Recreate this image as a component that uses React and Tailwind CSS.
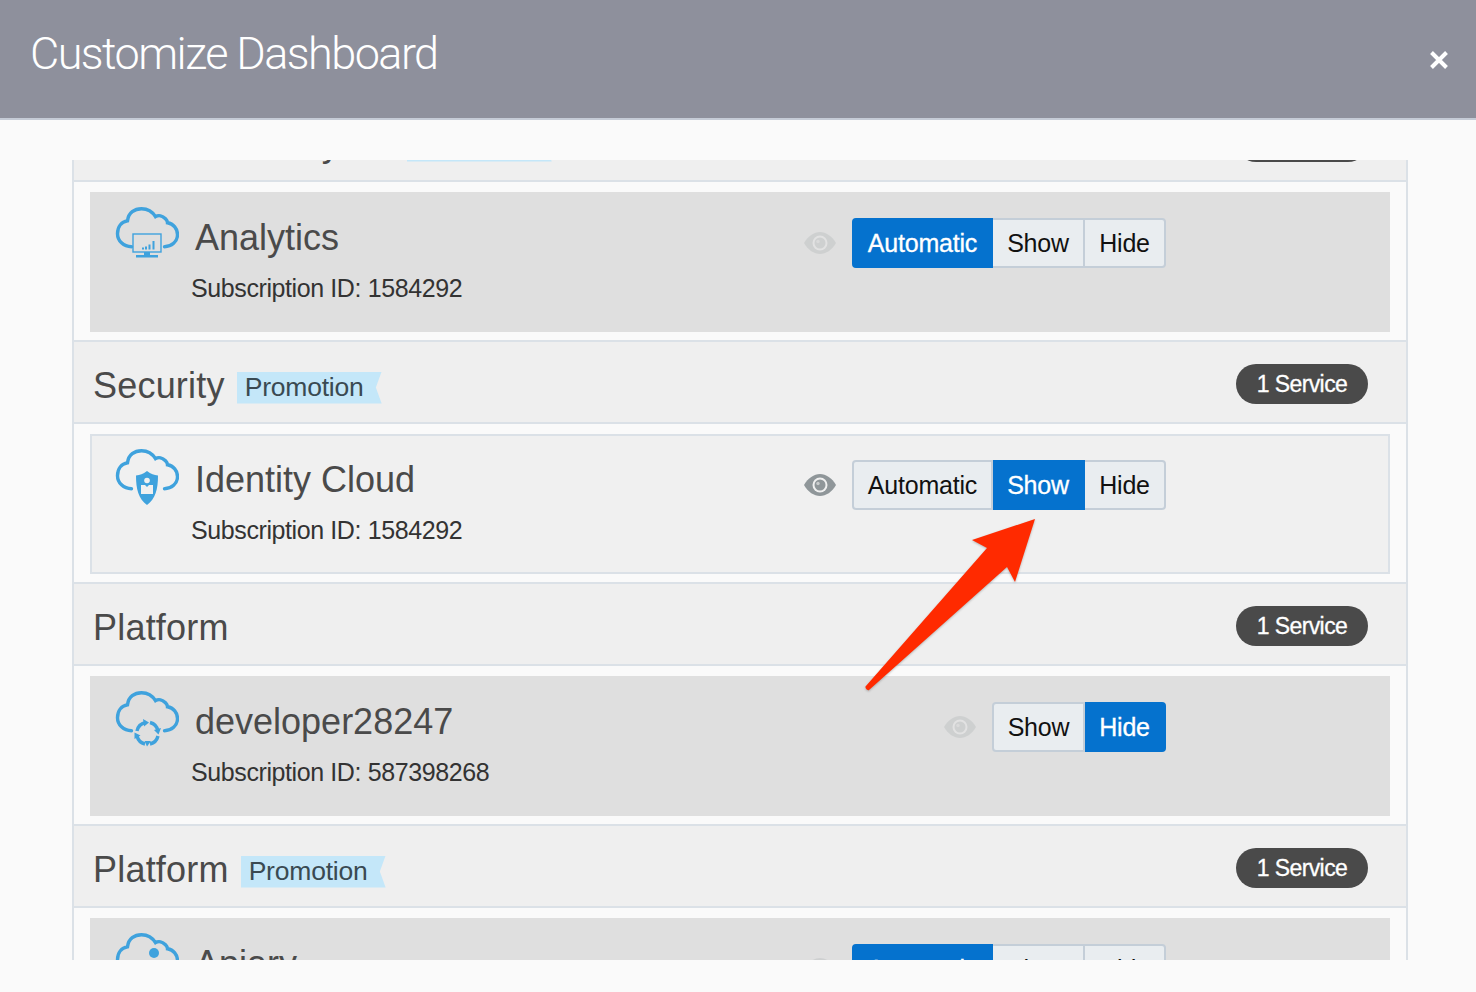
const font = { fontFamily: '"Liberation Sans", Arial, sans-serif' };

function Cloud({ children }) {
  return (
    <svg width="64" height="60" viewBox="0 0 64 60" className="shrink-0" fill="none">
      <path
        transform="translate(0.500 0.700)"
        d="M16 41C8 41 2 35 2 28C2 21 6 16 12 15C13 7 19 3 26 3C32 3 37 6 40 11C43 9 47 10 50 13C51.500 14.500 52 16 52 17C58 18 62 23 62 29C62 36 56 41 49 41"
        stroke="#3fa2dd"
        strokeWidth="3.400"
        strokeLinecap="round"
      />
      {children}
    </svg>
  );
}

function AnalyticsGlyph() {
  return (
    <g>
      <rect x="18" y="29" width="28" height="18" stroke="#3fa2dd" strokeWidth="1.400" fill="none" />
      <path d="M27 43.500h2M31 41.500v3M34.500 39.500v5M38.500 36v8.500" stroke="#3fa2dd" strokeWidth="2" />
      <path d="M29 47h6v3h-6z" fill="#3fa2dd" />
      <rect x="21" y="50" width="22" height="2.500" fill="#3fa2dd" />
    </g>
  );
}

function IdentityGlyph() {
  return (
    <g>
      <path d="M32 24C36 27 39 28 43 28.500C43 42 40.500 52 32 58C23.500 52 21 42 21 28.500C25 28 28 27 32 24Z" fill="#3fa2dd" />
      <circle cx="32" cy="33.500" r="2.800" fill="#f0f0f0" />
      <path d="M26 38h4l2 2 2-2h4v9H26z" fill="#f0f0f0" />
    </g>
  );
}

function DeveloperGlyph() {
  return (
    <g fill="none" stroke="#3fa2dd" strokeWidth="3.400">
      <path d="M22 42A11 11 0 0 1 31 33.500" />
      <path d="M35 33.500A11 11 0 0 1 43 42" />
      <path d="M43 47A11 11 0 0 1 35 55" />
      <path d="M30 55A11 11 0 0 1 22 47" />
      <path d="M28 30l6 3.500-5 4zM46 39l-2.500 6.500-4.500-4.500zM36 52l-4 5.500-2.500-5.500zM19.500 50l0-6.500 6 3z" fill="#3fa2dd" stroke="none" />
    </g>
  );
}

function ApiaryGlyph() {
  return (
    <g>
      <circle cx="39" cy="22" r="5" fill="#3fa2dd" />
      <path d="M22 44a10 10 0 0 1 20 0v6H22z" fill="#3fa2dd" />
    </g>
  );
}

function Eye({ muted }) {
  return (
    <svg width="32" height="24" viewBox="0 0 32 24" className={muted ? 'opacity-20' : ''}>
      <path d="M0 12C4 5 10 1 16 1C22 1 28 5 32 12C28 19 22 23 16 23C10 23 4 19 0 12Z" fill="#8f9699" />
      <circle cx="16" cy="12" r="7.500" fill="#f0f0f0" />
      <circle cx="16" cy="12" r="5.500" fill="#8f9699" />
      <circle cx="14" cy="10.500" r="1.700" fill="#f0f0f0" opacity="0.600" />
    </svg>
  );
}

function Toggle({ options, active }) {
  return (
    <div className="flex h-[50px] text-[25px] tracking-[-0.2px]">
      {options.map((opt, i) => {
        const on = opt.label === active;
        return (
          <div
            key={opt.label}
            style={{ width: opt.w }}
            className={`flex items-center justify-center border-y-2 border-r-2 pt-[2px] ${i === 0 ? 'border-l-2 rounded-l-[4px]' : ''} ${
              i === options.length - 1 ? 'rounded-r-[4px]' : ''
            } ${on ? 'bg-[#0572ce] border-[#0572ce] text-white [-webkit-text-stroke:0.3px_white]' : 'bg-[#e9edf0] border-[#c4ced8] text-[#111111]'}`}
          >
            {opt.label}
          </div>
        );
      })}
    </div>
  );
}

const threeWay = [
  { label: 'Automatic', w: 141 },
  { label: 'Show', w: 92 },
  { label: 'Hide', w: 81 },
];
const twoWay = [
  { label: 'Show', w: 93 },
  { label: 'Hide', w: 81 },
];

const sections = [
  { title: 'Business Analytics', promo: true, item: { name: 'Analytics', sub: '1584292', glyph: <AnalyticsGlyph />, active: 'Automatic', options: threeWay, selected: true } },
  { title: 'Security', promo: true, item: { name: 'Identity Cloud', sub: '1584292', glyph: <IdentityGlyph />, active: 'Show', options: threeWay } },
  { title: 'Platform', item: { name: 'developer28247', sub: '587398268', glyph: <DeveloperGlyph />, active: 'Hide', options: twoWay, selected: true } },
  { title: 'Platform', promo: true, item: { name: 'Apiary', sub: '1584292', glyph: <ApiaryGlyph />, active: 'Automatic', options: threeWay, selected: true } },
];

function Section({ title, promo, item }) {
  return (
    <section>
      <div className="flex h-[84px] items-center justify-between border-y-2 border-[#dbe1e7] bg-[#efefef] pl-[19px] pr-[38px]">
        <div className="mt-[8px] flex items-center gap-[12px]">
          <span className="text-[36px] tracking-[0.2px] text-[#4a4a4a]">{title}</span>
          {promo && (
            <span className="mt-[3px] flex h-[32px] w-[145px] items-center bg-[#c4e7f9] pl-[8px] text-[26.5px] text-[#3a4a52] tracking-[-0.2px] [clip-path:polygon(0_0,100%_0,96%_50%,100%_100%,0_100%)]">
              Promotion
            </span>
          )}
        </div>
        <span className="mt-[4px] flex h-[40px] w-[132px] items-center justify-center rounded-full bg-[#4a4a4a] text-[23px] tracking-[-0.6px] text-white [-webkit-text-stroke:0.3px_white]">
          1 Service
        </span>
      </div>
      <div className="px-[16px] pb-[8px] pt-[10px]">
        <div
          className={`flex h-[140px] justify-between border-2 pl-[23px] pr-[222px] pt-[11px] ${
            item.selected ? 'border-transparent bg-[#dfdfdf]' : 'border-[#dbe1e7] bg-[#f0f0f0]'
          }`}
        >
          <div>
            <div className="flex items-center gap-[16px]">
              <Cloud>{item.glyph}</Cloud>
              <span className="mt-[6px] text-[36px] leading-[44px] text-[#4a4a4a]">{item.name}</span>
            </div>
            <div className="mt-[8px] ml-[76px] text-[25px] leading-[30px] text-[#333333] tracking-[-0.4px]">Subscription ID: {item.sub}</div>
          </div>
          <div className="mt-[13px] flex h-[50px] items-center gap-[16px]">
            <Eye muted={item.selected} />
            <Toggle options={item.options} active={item.active} />
          </div>
        </div>
      </div>
    </section>
  );
}

export default function App() {
  return (
    <div className="relative h-[992px] w-[1476px] overflow-hidden bg-[#fafafa]" style={font}>
      <header className="flex h-[120px] items-start justify-between border-b-2 border-[#c5cbd6] bg-[#8e909c] pl-[30px] pr-[27px]">
        <h1 className="mt-[26px] text-[45px] font-light leading-[56px] tracking-[-1.55px] text-white" style={{ fontFamily: 'Roboto, sans-serif' }}>
          Customize Dashboard
        </h1>
        <svg width="20" height="20" viewBox="0 0 20 20" className="mt-[50px]">
          <path d="M2.500 2.500L17.500 17.500M17.500 2.500L2.500 17.500" stroke="white" strokeWidth="4" />
        </svg>
      </header>

      <div className="ml-[72px] mt-[40px] h-[800px] w-[1336px] overflow-hidden border-x-2 border-[#dbe1e7]">
        <div className="-mt-[62px]">
          {sections.map((s, i) => (
            <Section key={i} {...s} />
          ))}
        </div>
      </div>

      {/* callout arrow on top of the screenshot */}
      <svg width="1476" height="992" className="pointer-events-none absolute left-0 top-0">
        <path
          d="M1035 519L972 540L987 548L865.500 686.500C865 688 867 691 869 690L1007 567L1015 582Z"
          fill="#ff2a00"
          style={{ filter: 'drop-shadow(0 1px 1px rgba(0,0,0,0.25))' }}
        />
      </svg>
    </div>
  );
}
